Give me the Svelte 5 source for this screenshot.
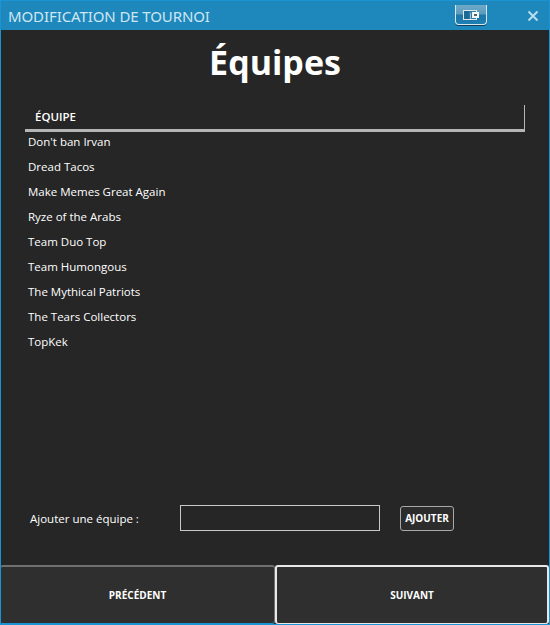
<script>
	const teams = [
		"Don't ban Irvan",
		'Dread Tacos',
		'Make Memes Great Again',
		'Ryze of the Arabs',
		'Team Duo Top',
		'Team Humongous',
		'The Mythical Patriots',
		'The Tears Collectors',
		'TopKek'
	];
</script>

<div class="window">
	<header class="titlebar">
		<span class="caption">MODIFICATION DE TOURNOI</span>
		<div class="snap">
			<svg width="18" height="12" viewBox="0 0 18 12" aria-hidden="true">
				<rect x="1.5" y="1.5" width="13" height="9" fill="#2f7fa8" stroke="#dfe7ec" />
				<rect x="2" y="2" width="5" height="8" fill="#1c6a94" />
				<rect x="8" y="4" width="1" height="6" fill="#9fb9c8" />
				<rect x="10" y="3" width="7" height="6" fill="#f4f6f7" />
				<rect x="12" y="5" width="3" height="2" fill="#56626a" />
			</svg>
		</div>
		<svg class="close" width="12" height="12" viewBox="0 0 12 12" aria-hidden="true">
			<path d="M1.5 1.5 L10.5 10.5 M10.5 1.5 L1.5 10.5" stroke="#b9dcee" stroke-width="2" />
		</svg>
	</header>

	<main class="body">
		<h1>Équipes</h1>

		<div class="list">
			<div class="list-head">ÉQUIPE</div>
			{#each teams as team}
				<div class="row">{team}</div>
			{/each}
		</div>

		<div class="add">
			<label for="team">Ajouter une équipe :</label>
			<input id="team" type="text" />
			<button class="add-btn">AJOUTER</button>
		</div>

		<div class="nav">
			<button class="nav-btn prev">PRÉCÉDENT</button>
			<button class="nav-btn active">SUIVANT</button>
		</div>
	</main>
</div>

<style>
	:global(body) {
		margin: 0;
		background: #262626;
	}

	.window {
		width: 550px;
		height: 625px;
		box-sizing: border-box;
		display: flex;
		flex-direction: column;
		border: 1px solid #1b94d6;
		background: #262626;
		color: #fff;
		font-family: 'Open Sans', 'Noto Sans', sans-serif;
		overflow: hidden;
	}

	.titlebar {
		height: 29px;
		flex: none;
		display: flex;
		align-items: center;
		background: #1e88bc;
		position: relative;
	}

	.caption {
		margin-left: 7px;
		font-size: 15px;
		color: #cfe6f2;
		font-family: 'Noto Sans', sans-serif;
		letter-spacing: -0.1px;
	}

	.snap {
		position: absolute;
		left: 454px;
		top: 4px;
		width: 30px;
		height: 19px;
		display: flex;
		align-items: center;
		justify-content: center;
		border: 1px solid #d5e8f2;
		border-top: none;
		border-radius: 0 0 4px 4px;
		background: linear-gradient(#6fa9c7, #5d9cbd 45%, #1d76a6 55%, #1d7fb2);
		box-shadow: 0 1px 0 #143f58;
	}

	.close {
		position: absolute;
		left: 526px;
		top: 9px;
	}

	.body {
		flex: 1;
		display: flex;
		flex-direction: column;
		min-height: 0;
	}

	h1 {
		margin: 9px 0 0;
		height: 66px;
		text-align: center;
		font-size: 34px;
		line-height: 46px;
		font-weight: 700;
	}

	.list {
		margin: 0 24px;
		flex: 1;
	}

	.list-head {
		height: 24px;
		padding-left: 10px;
		font-size: 11.5px;
		font-weight: 600;
		line-height: 24px;
		border-right: 1px solid #b5b5b5;
		border-bottom: 3px solid #b5b5b5;
	}

	.row {
		height: 25px;
		line-height: 20px;
		padding-left: 3px;
		font-size: 11.5px;
	}

	.add {
		display: flex;
		align-items: center;
		height: 26px;
		margin-bottom: 34px;
		padding-left: 29px;
	}

	label {
		width: 150px;
		font-size: 11.5px;
	}

	input {
		width: 200px;
		height: 26px;
		box-sizing: border-box;
		background: #262626;
		border: 1px solid #c8c8c8;
		margin: 0;
		padding: 0;
	}

	.add-btn {
		margin-left: 20px;
		width: 54px;
		height: 25px;
		padding: 0;
		background: #2c2c2c;
		border: 1px solid #a8a8a8;
		border-radius: 3px;
		color: #fff;
		font: 700 10px 'Open Sans', sans-serif;
	}

	.nav {
		display: flex;
		height: 59px;
		flex: none;
	}

	.nav-btn {
		flex: none;
		width: 274px;
		height: 59px;
		padding: 0;
		background: #2f2f2f;
		border: 1px solid #707070;
		border-top-width: 2px;
		border-bottom-color: #1b94d6;
		border-radius: 3px;
		color: #fff;
		font: 700 10px 'Open Sans', sans-serif;
	}

	.nav-btn.prev {
		width: 275px;
		margin-left: -1px;
		border-left-color: #2f2f2f;
	}

	.nav-btn.active {
		border: 2px solid #e8e8e8;
		border-bottom: 1px solid #e8e8e8;
	}
</style>
